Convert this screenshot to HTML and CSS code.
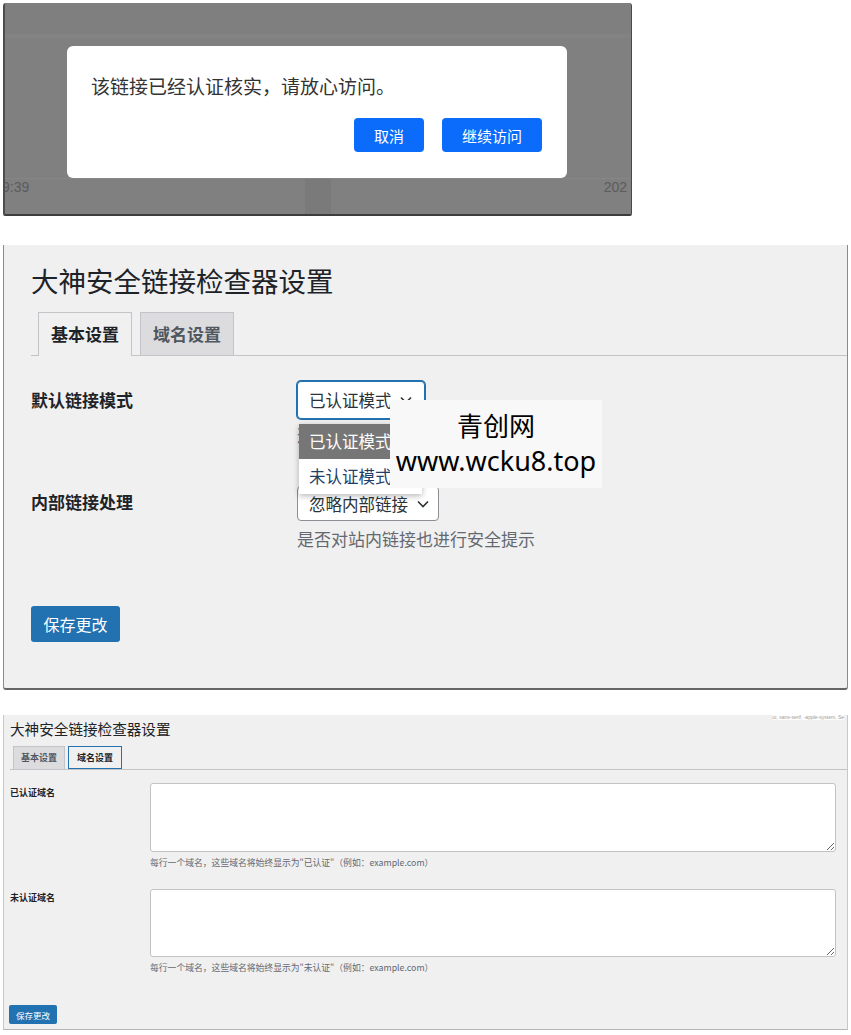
FILE: index.html
```html
<!DOCTYPE html>
<html lang="zh-CN">
<head>
<meta charset="utf-8">
<title>大神安全链接检查器设置</title>
<link rel="stylesheet" href="styles.css">
</head>
<body>
<div class="page">
  <section class="shot1">
    <div class="s1-head"></div>
    <div class="s1-mid">
      <div class="dialog">
        <p class="dlg-msg">该链接已经认证核实，请放心访问。</p>
        <div class="dlg-actions">
          <button class="dbtn dbtn-cancel">取消</button>
          <button class="dbtn dbtn-go">继续访问</button>
        </div>
      </div>
    </div>
    <div class="s1-foot">
      <span class="s1-time">9:39</span>
      <i class="s1-strip"></i>
      <span class="s1-date">202</span>
    </div>
  </section>

  <section class="shot2">
    <h1 class="title-lg">大神安全链接检查器设置</h1>
    <nav class="tabs-lg">
      <span class="tab-lg tab-lg-active">基本设置</span>
      <span class="tab-lg">域名设置</span>
    </nav>
    <div class="form-lg">
      <div class="row-lg row-lg-first">
        <div class="label-lg label-lg-1">默认链接模式</div>
        <div class="field-lg">
          <div class="select-wrap">
            <div class="select-lg select-focus">
              <span>已认证模式</span>
              <svg class="chev" width="12" height="8" viewBox="0 0 12 8"><path d="M1 1.5l5 5 5-5" fill="none" stroke="#2c3338" stroke-width="1.6"/></svg>
            </div>
            <div class="dropdown">
              <div class="opt opt-sel">已认证模式</div>
              <div class="opt">未认证模式</div>
            </div>
          </div>
          <p class="desc-lg">选择默认</p>
        </div>
      </div>
      <div class="row-lg row-lg-second">
        <div class="label-lg label-lg-2">内部链接处理</div>
        <div class="field-lg">
          <div class="select-lg select-plain">
            <span>忽略内部链接</span>
            <svg class="chev" width="12" height="8" viewBox="0 0 12 8"><path d="M1 1.5l5 5 5-5" fill="none" stroke="#2c3338" stroke-width="1.6"/></svg>
          </div>
          <p class="desc-lg desc-lg-2">是否对站内链接也进行安全提示</p>
        </div>
      </div>
      <button class="save-lg">保存更改</button>
    </div>
    <div class="watermark">
      <div class="wm-cn">青创网</div>
      <div class="wm-url">www.wcku8.top</div>
    </div>
  </section>

  <section class="shot3">
    <span class="corner-text">ui, sans-serif, -apple-system, Se</span>
    <h1 class="title-sm">大神安全链接检查器设置</h1>
    <nav class="tabs-sm">
      <span class="tab-sm">基本设置</span>
      <span class="tab-sm tab-sm-active">域名设置</span>
    </nav>
    <div class="form-sm">
      <div class="row-sm">
        <div class="label-sm">已认证域名</div>
        <div class="field-sm">
          <textarea class="ta ta-1"></textarea>
          <p class="desc-sm">每行一个域名，这些域名将始终显示为"已认证"（例如：example.com）</p>
        </div>
      </div>
      <div class="row-sm row-sm-2">
        <div class="label-sm label-sm-2">未认证域名</div>
        <div class="field-sm">
          <textarea class="ta ta-2"></textarea>
          <p class="desc-sm">每行一个域名，这些域名将始终显示为"未认证"（例如：example.com）</p>
        </div>
      </div>
      <button class="save-sm">保存更改</button>
    </div>
  </section>
</div>
</body>
</html>
```
FILE: styles.css
```css
html, body {
  margin: 0;
  padding: 0;
  background: #ffffff;
}
body {
  font-family: "Noto Sans CJK SC", "Noto Sans", sans-serif;
  color: #1d2327;
}
.page {
  padding: 3px 0 0 3px;
  width: 845px;
}

/* ---------- shot 1: modal ---------- */
.shot1 {
  width: 629px;
  height: 213px;
  box-sizing: border-box;
  background: #808080;
  border-left: 2px solid #4d4d4d;
  border-right: 1px solid #4a4a4a;
  border-bottom: 2px solid #3d3d3d;
  border-radius: 3px 3px 2px 2px;
  overflow: hidden;
  display: flex;
  flex-direction: column;
}
.s1-head {
  height: 43px;
  background: linear-gradient(to bottom, #7f7f7f 0, #7f7f7f 31px, #838383 31px, #838383 35px, #808080 35px);
}
.s1-mid {
  padding-left: 62px;
}
.dialog {
  width: 500px;
  height: 132px;
  box-sizing: border-box;
  background: #ffffff;
  border-radius: 6px;
  padding: 26px 25px 0 24px;
}
.dlg-msg {
  margin: 0;
  font-size: 19px;
  line-height: 27px;
  color: #333333;
  white-space: nowrap;
}
.dlg-actions {
  display: flex;
  justify-content: flex-end;
  gap: 18px;
  margin-top: 19px;
}
.dbtn {
  height: 34px;
  border: none;
  border-radius: 4px;
  background: #0b6cfb;
  color: #ffffff;
  font-family: "Noto Sans CJK SC", sans-serif;
  font-size: 15px;
  padding: 0;
}
.dbtn-cancel { width: 70px; }
.dbtn-go { width: 100px; }
.s1-foot {
  flex: 1;
  display: grid;
  grid-template-columns: 1fr 26px 1fr;
  font-family: "Liberation Sans", Arial, sans-serif;
  font-size: 14px;
  line-height: 16px;
  color: #5b5b5b;
  border-top: 1px solid #868686;
}
.s1-time {
  margin-left: -3px;
}
.s1-strip {
  display: block;
  background: #7a7a7a;
}
.s1-date {
  justify-self: end;
  margin-right: 4px;
}

/* ---------- shot 2: basic settings ---------- */
.shot2 {
  position: relative;
  margin-top: 29px;
  width: 845px;
  box-sizing: border-box;
  background: #f0f0f1;
  border-left: 1px solid #8a8a8a;
  border-right: 1px solid #8a8a8a;
  border-bottom: 2px solid #666666;
  border-radius: 0 0 3px 3px;
  padding: 19px 0 46px 27px;
}
.title-lg {
  margin: 0;
  font-size: 27.5px;
  line-height: 33px;
  font-weight: 400;
  color: #1d2327;
  white-space: nowrap;
}
.tabs-lg {
  display: flex;
  gap: 8px;
  margin-top: 15px;
  padding-left: 7px;
  border-bottom: 1px solid #c3c4c7;
}
.tab-lg {
  box-sizing: border-box;
  height: 43px;
  line-height: 42px;
  padding: 0 12px;
  border: 1px solid #c3c4c7;
  border-bottom: none;
  background: #dcdcde;
  color: #50575e;
  font-size: 17px;
  font-weight: 600;
}
.tab-lg-active {
  height: 44px;
  margin-bottom: -1px;
  background: #f0f0f1;
  color: #1d2327;
  font-weight: 700;
}
.form-lg {
  padding-top: 25px;
}
.row-lg {
  display: grid;
  grid-template-columns: 266px auto;
  align-items: start;
}
.row-lg-second {
  margin-top: 39px;
}
.label-lg {
  font-size: 17px;
  line-height: 24px;
  font-weight: 700;
  color: #1d2327;
}
.label-lg-1 { padding-top: 7px; }
.label-lg-2 { padding-top: 4px; }
.select-wrap {
  position: relative;
  width: 128px;
}
.select-lg {
  box-sizing: border-box;
  display: flex;
  align-items: center;
  justify-content: space-between;
  background: #ffffff;
  border-radius: 4px;
  font-size: 16.5px;
  color: #2c3338;
  white-space: nowrap;
}
.select-focus {
  width: 128px;
  height: 38px;
  border: 1px solid #2271b1;
  box-shadow: 0 0 0 1px #2271b1;
  padding: 0 12px 0 11px;
}
.select-plain {
  width: 142px;
  height: 35px;
  border: 1px solid #8c8f94;
  padding: 0 9px 0 11px;
}
.chev {
  display: block;
  flex: none;
}
.dropdown {
  position: absolute;
  left: 2px;
  top: 43px;
  width: 123px;
  background: #ffffff;
  box-shadow: 0 2px 6px rgba(0, 0, 0, 0.28);
  z-index: 2;
}
.opt {
  height: 35px;
  line-height: 35px;
  padding-left: 10px;
  font-size: 16.5px;
  color: #1f3f6a;
  white-space: nowrap;
  overflow: hidden;
}
.opt-sel {
  background: #767676;
  color: #ffffff;
}
.desc-lg {
  margin: 4px 0 0;
  font-size: 17px;
  line-height: 24px;
  color: #646970;
}
.desc-lg-2 {
  margin-top: 6px;
}
.save-lg {
  display: block;
  margin-top: 55px;
  width: 89px;
  height: 36px;
  border: none;
  border-radius: 3px;
  background: #2271b1;
  color: #ffffff;
  font-family: "Noto Sans CJK SC", sans-serif;
  font-size: 16px;
  padding: 0;
}
.watermark {
  position: absolute;
  left: 386px;
  top: 155px;
  width: 212px;
  height: 88px;
  background: #f8f8f8;
  text-align: center;
  color: #000000;
  z-index: 3;
}
.wm-cn {
  margin-top: 9px;
  font-size: 26px;
  line-height: 32px;
}
.wm-url {
  font-family: "Noto Sans", "Open Sans", sans-serif;
  font-size: 27px;
  line-height: 36px;
  margin-top: 2px;
  white-space: nowrap;
}

/* ---------- shot 3: domain settings ---------- */
.shot3 {
  position: relative;
  margin-top: 25px;
  width: 845px;
  box-sizing: border-box;
  background: #f0f0f1;
  border-left: 1px solid #c9c9c9;
  border-right: 1px solid #c9c9c9;
  border-bottom: 1px solid #b5b5b5;
  padding: 5px 11px 5px 6px;
}
.corner-text {
  position: absolute;
  right: 3px;
  top: -1px;
  font-family: "Liberation Sans", sans-serif;
  font-size: 5px;
  line-height: 6px;
  color: #9a9a9a;
  background: #ffffff;
}
.title-sm {
  margin: 0;
  font-size: 14.6px;
  line-height: 18px;
  font-weight: 400;
  color: #1d2327;
  white-space: nowrap;
}
.tabs-sm {
  display: flex;
  gap: 3px;
  margin: 8px -11px 0 0;
  padding-left: 3px;
  border-bottom: 1px solid #c3c4c7;
}
.tab-sm {
  box-sizing: border-box;
  height: 23px;
  line-height: 22px;
  padding: 0 7px;
  border: 1px solid #c3c4c7;
  border-bottom: none;
  background: #dcdcde;
  color: #50575e;
  font-size: 9px;
  font-weight: 600;
}
.tab-sm-active {
  border: 1px solid #2271b1;
  background: #f0f0f1;
  color: #1d2327;
  font-weight: 700;
  padding: 0 8px;
}
.form-sm {
  padding-top: 13px;
}
.row-sm {
  display: grid;
  grid-template-columns: 140px 1fr;
  align-items: start;
}
.row-sm-2 {
  margin-top: 20px;
}
.label-sm {
  padding-top: 4px;
  font-size: 9px;
  line-height: 12px;
  font-weight: 700;
  color: #1d2327;
}
.label-sm-2 {
  padding-top: 3px;
}
.ta {
  display: block;
  width: 100%;
  box-sizing: border-box;
  margin: 0;
  border: 1px solid #c2c3c6;
  border-radius: 3px;
  background: #ffffff;
  resize: vertical;
}
.ta-1 { height: 69px; }
.ta-2 { height: 68px; }
.desc-sm {
  margin: 5px 0 0;
  font-size: 8.8px;
  line-height: 12px;
  color: #646970;
  white-space: nowrap;
}
.save-sm {
  display: block;
  margin: 31px 0 0 -1px;
  width: 48px;
  height: 19px;
  border: none;
  border-radius: 2px;
  background: #2271b1;
  color: #ffffff;
  font-family: "Noto Sans CJK SC", sans-serif;
  font-size: 8.5px;
  padding: 0;
}
```
